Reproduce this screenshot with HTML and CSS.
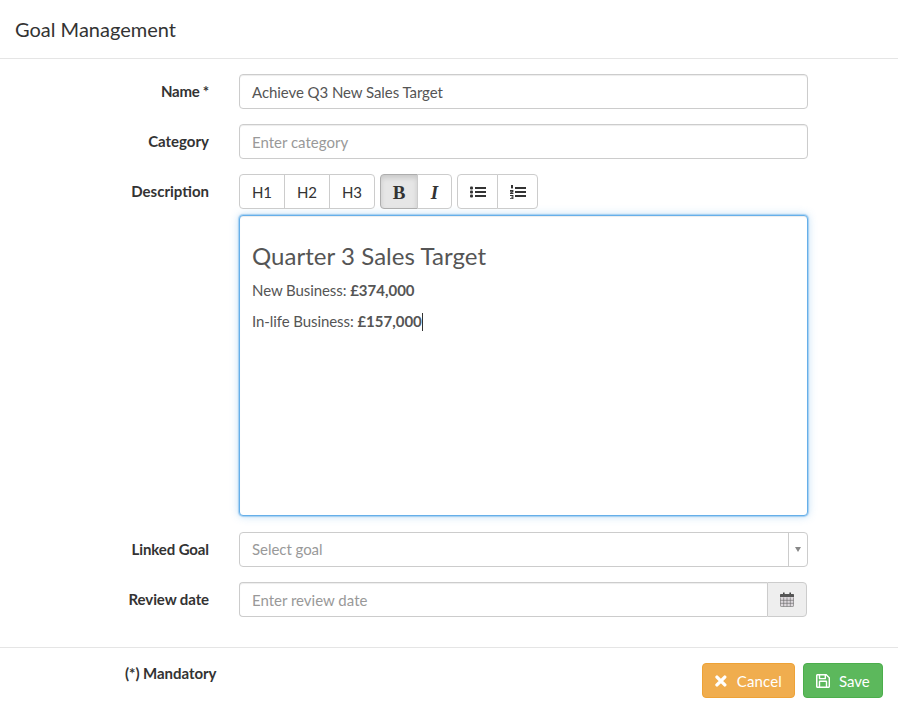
FILE: index.html
```html
<!DOCTYPE html>
<html lang="en">
<head>
<meta charset="utf-8">
<title>Goal Management</title>
<link rel="stylesheet" href="styles.css">
</head>
<body>
<div class="modal">
  <header class="modal-header"><h4>Goal Management</h4></header>
  <form class="modal-body">
    <div class="row">
      <label class="label label-tight">Name *</label>
      <div class="control"><div class="input value">Achieve Q3 New Sales Target</div></div>
    </div>
    <div class="row">
      <label class="label label-wide">Category</label>
      <div class="control"><div class="input placeholder">Enter category</div></div>
    </div>
    <div class="row row-editor">
      <label class="label label-wide">Description</label>
      <div class="control">
        <div class="toolbar">
          <div class="btn-group">
            <button type="button" class="tb">H1</button><button type="button" class="tb">H2</button><button type="button" class="tb">H3</button>
          </div>
          <div class="btn-group">
            <button type="button" class="tb tb-serif active">B</button><button type="button" class="tb tb-serif tb-italic">I</button>
          </div>
          <div class="btn-group">
            <button type="button" class="tb tb-icon" aria-label="Bulleted list">
              <svg width="16" height="12" viewBox="0 0 16 12"><g fill="#333"><rect x="0" y="0.5" width="3" height="3" rx="1"/><rect x="0" y="4.5" width="3" height="3" rx="1"/><rect x="0" y="8.5" width="3" height="3" rx="1"/><rect x="5" y="1" width="11" height="2"/><rect x="5" y="5" width="11" height="2"/><rect x="5" y="9" width="11" height="2"/></g></svg>
            </button><button type="button" class="tb tb-icon" aria-label="Numbered list">
              <svg width="16" height="14" viewBox="0 0 16 14"><g fill="#333"><rect x="5" y="2" width="11" height="2"/><rect x="5" y="6" width="11" height="2"/><rect x="5" y="10" width="11" height="2"/><rect x="1" y="0" width="2" height="3.4"/><path d="M0 5h3.4v2.2l-2 .9h2V9H0V7.7l2.2-1H0z"/><path d="M0 10h3.4v4H0v-.8h2.4v-.8H1v-.7h1.4v-.8H0z"/></g></svg>
            </button>
          </div>
        </div>
        <div class="editor">
          <h3>Quarter 3 Sales Target</h3>
          <p>New Business: <b>£374,000</b></p>
          <p>In-life Business: <b>£157,000</b><span class="caret"></span></p>
        </div>
      </div>
    </div>
    <div class="row">
      <label class="label">Linked Goal</label>
      <div class="control">
        <div class="select">
          <div class="select-text placeholder">Select goal</div>
          <div class="select-arrow"><span></span></div>
        </div>
      </div>
    </div>
    <div class="row row-last">
      <label class="label">Review date</label>
      <div class="control control-date">
        <div class="input-group">
          <div class="input input-left placeholder">Enter review date</div>
          <div class="addon">
            <svg width="14" height="15" viewBox="0 0 14 15"><path fill="#444" d="M3 .5h1.600v2.800H3zM9.400 .5H11v2.800H9.400z"/><path fill="#555" d="M1 2h12c.6 0 1 .4 1 1v2.500H0V3c0-.6.4-1 1-1z"/><path fill="#dcd8dc" d="M0 5h14v9H0z"/><path fill="none" stroke="#666" stroke-width=".6" d="M.4 5.500v8.300c0 .4.3.7.700.7h11.800c.4 0 .7-.3.700-.7V5.500M3.700 5.500v9M7 5.500v9M10.300 5.500v9M.4 8.300h13.200M.4 11.300h13.200"/></svg>
          </div>
        </div>
      </div>
    </div>
  </form>
  <footer class="modal-footer">
    <span class="mandatory">(*) Mandatory</span>
    <div class="actions">
      <button type="button" class="btn btn-cancel">
        <svg width="12" height="12" viewBox="0 0 12 12"><path fill="none" stroke="#fff" stroke-width="3.4" stroke-linecap="round" d="M2 2l8 8M10 2l-8 8"/></svg>
        <span>Cancel</span>
      </button>
      <button type="button" class="btn btn-save">
        <svg width="14" height="14" viewBox="0 0 14 14"><path fill="#fff" fill-rule="evenodd" d="M1.5 0H10.5L14 3.5V12.5C14 13.3 13.3 14 12.5 14H1.5C.7 14 0 13.3 0 12.5V1.5C0 .7.7 0 1.5 0zM1.5 1.4V12.6H2.8V7.5C2.8 7 3.2 6.6 3.7 6.6H10.3C10.8 6.6 11.2 7 11.2 7.5V12.6H12.6V4.1L10 1.6V4.4C10 4.9 9.600 5.300 9.100 5.300H3.700C3.200 5.300 2.800 4.900 2.800 4.400V1.400zM4.200 1.400V3.900H8.600V1.400zM4.200 8V12.600H9.800V8z"/></svg>
        <span>Save</span>
      </button>
    </div>
  </footer>
</div>
</body>
</html>
```
FILE: styles.css
```css
* { box-sizing: border-box; }
html, body { margin: 0; padding: 0; }
body {
  width: 898px;
  height: 713px;
  overflow: hidden;
  background: #fff;
  font-family: Lato, "Liberation Sans", sans-serif;
  font-size: 15px;
  line-height: 1.42857;
  color: #555;
}
.modal { display: flex; flex-direction: column; height: 713px; }
.modal-header {
  height: 59px;
  padding: 15px;
  border-bottom: 1px solid #e5e5e5;
}
.modal-header h4 {
  margin: 0;
  font-size: 20px;
  font-weight: 400;
  line-height: 28px;
  color: #333;
}
.modal-body { padding: 15px 90px 0 0; height: 588px; }
.row { display: flex; margin-bottom: 15px; }
.row-last { margin-bottom: 0; }
.label {
  width: 209px;
  flex: none;
  padding-top: 7px;
  text-align: right;
  font-weight: 700;
  font-size: 15px;
  line-height: 21px;
  color: #333;
  letter-spacing: -0.1px;
}
.label-tight { letter-spacing: -0.25px; }
.label-wide { letter-spacing: 0; }
.control { margin-left: 30px; width: 569px; }
.control-date { width: 568px; }
.input {
  height: 35px;
  border: 1px solid #ccc;
  border-radius: 4px;
  padding: 7px 12px;
  line-height: 21px;
  background: #fff;
  box-shadow: inset 0 1px 1px rgba(0,0,0,.075);
}
.value { color: #555; letter-spacing: -0.07px; }
.placeholder { color: #999; }
.toolbar { display: flex; gap: 5px; height: 35px; margin-bottom: 6px; }
.btn-group { display: flex; }
.tb {
  height: 35px;
  width: 46px;
  padding: 0;
  margin: 0;
  margin-left: -1px;
  border: 1px solid #ccc;
  background: #fff;
  font-family: Lato, sans-serif;
  font-size: 15px;
  color: #333;
  display: flex;
  align-items: center;
  justify-content: center;
}
.tb:first-child { margin-left: 0; border-radius: 4px 0 0 4px; }
.tb:last-child { border-radius: 0 4px 4px 0; }
.tb-serif {
  width: 38px;
  padding-top: 2px;
  font-family: "Liberation Serif", serif;
  font-size: 19px;
  font-weight: 700;
}
.tb-italic { font-style: italic; width: 35px; }
.tb-icon { width: 41px; }
.active {
  background: #e6e6e6;
  border-color: #adadad;
  box-shadow: inset 0 3px 5px rgba(0,0,0,.125);
}
.editor {
  height: 301px;
  margin-bottom: 16px;
  border: 1px solid #66afe9;
  border-radius: 4px;
  padding: 7px 12px;
  box-shadow: inset 0 1px 1px rgba(0,0,0,.075), 0 0 1px 1px rgba(102,175,233,.5), 0 0 8px rgba(102,175,233,.45);
  background: #fff;
}
.row-editor { margin-bottom: 0; }
.editor h3 {
  margin: 18px 0 10px;
  font-size: 24px;
  font-weight: 400;
  line-height: 29px;
  color: #555;
  letter-spacing: 0.05px;
}
.editor p { margin: 0 0 10px; line-height: 21px; letter-spacing: -0.08px; }
.editor b { font-weight: 700; letter-spacing: 0; }
.caret {
  display: inline-block;
  width: 1px;
  height: 18px;
  background: #333;
  vertical-align: -4px;
}
.select {
  display: flex;
  height: 35px;
  border: 1px solid #ccc;
  border-radius: 4px;
  background: #fff;
}
.select-text { flex: 1; padding: 6px 12px; line-height: 21px; letter-spacing: -0.05px; }
.select-arrow {
  width: 19px;
  border-left: 1px solid #ccc;
  display: flex;
  align-items: center;
  justify-content: center;
}
.select-arrow span {
  width: 0;
  height: 0;
  border-left: 3.5px solid transparent;
  border-right: 3.5px solid transparent;
  border-top: 5px solid #888;
}
.input-group { display: flex; }
.input-left { flex: 1; border-radius: 4px 0 0 4px; border-right: 0; }
.addon {
  width: 40px;
  height: 35px;
  border: 1px solid #ccc;
  border-radius: 0 4px 4px 0;
  background: #eee;
  display: flex;
  align-items: center;
  justify-content: center;
}
.modal-footer {
  height: 66px;
  border-top: 1px solid #e5e5e5;
  padding: 15px;
  display: flex;
  justify-content: space-between;
}
.mandatory {
  margin-left: 110px;
  font-weight: 700;
  color: #333;
  line-height: 21px;
  letter-spacing: -0.04px;
}
.actions { display: flex; gap: 8px; }
.btn {
  height: 35px;
  border: 1px solid;
  border-radius: 4px;
  color: #fff;
  font-family: Lato, sans-serif;
  font-size: 15px;
  display: flex;
  align-items: center;
  gap: 10px;
  padding: 0 12px;
  letter-spacing: 0.15px;
}
.btn-cancel { background: #f0ad4e; border-color: #eea236; width: 93px; }
.btn-save { background: #5cb85c; border-color: #4cae4c; width: 80px; gap: 9px; letter-spacing: 0; }
```
